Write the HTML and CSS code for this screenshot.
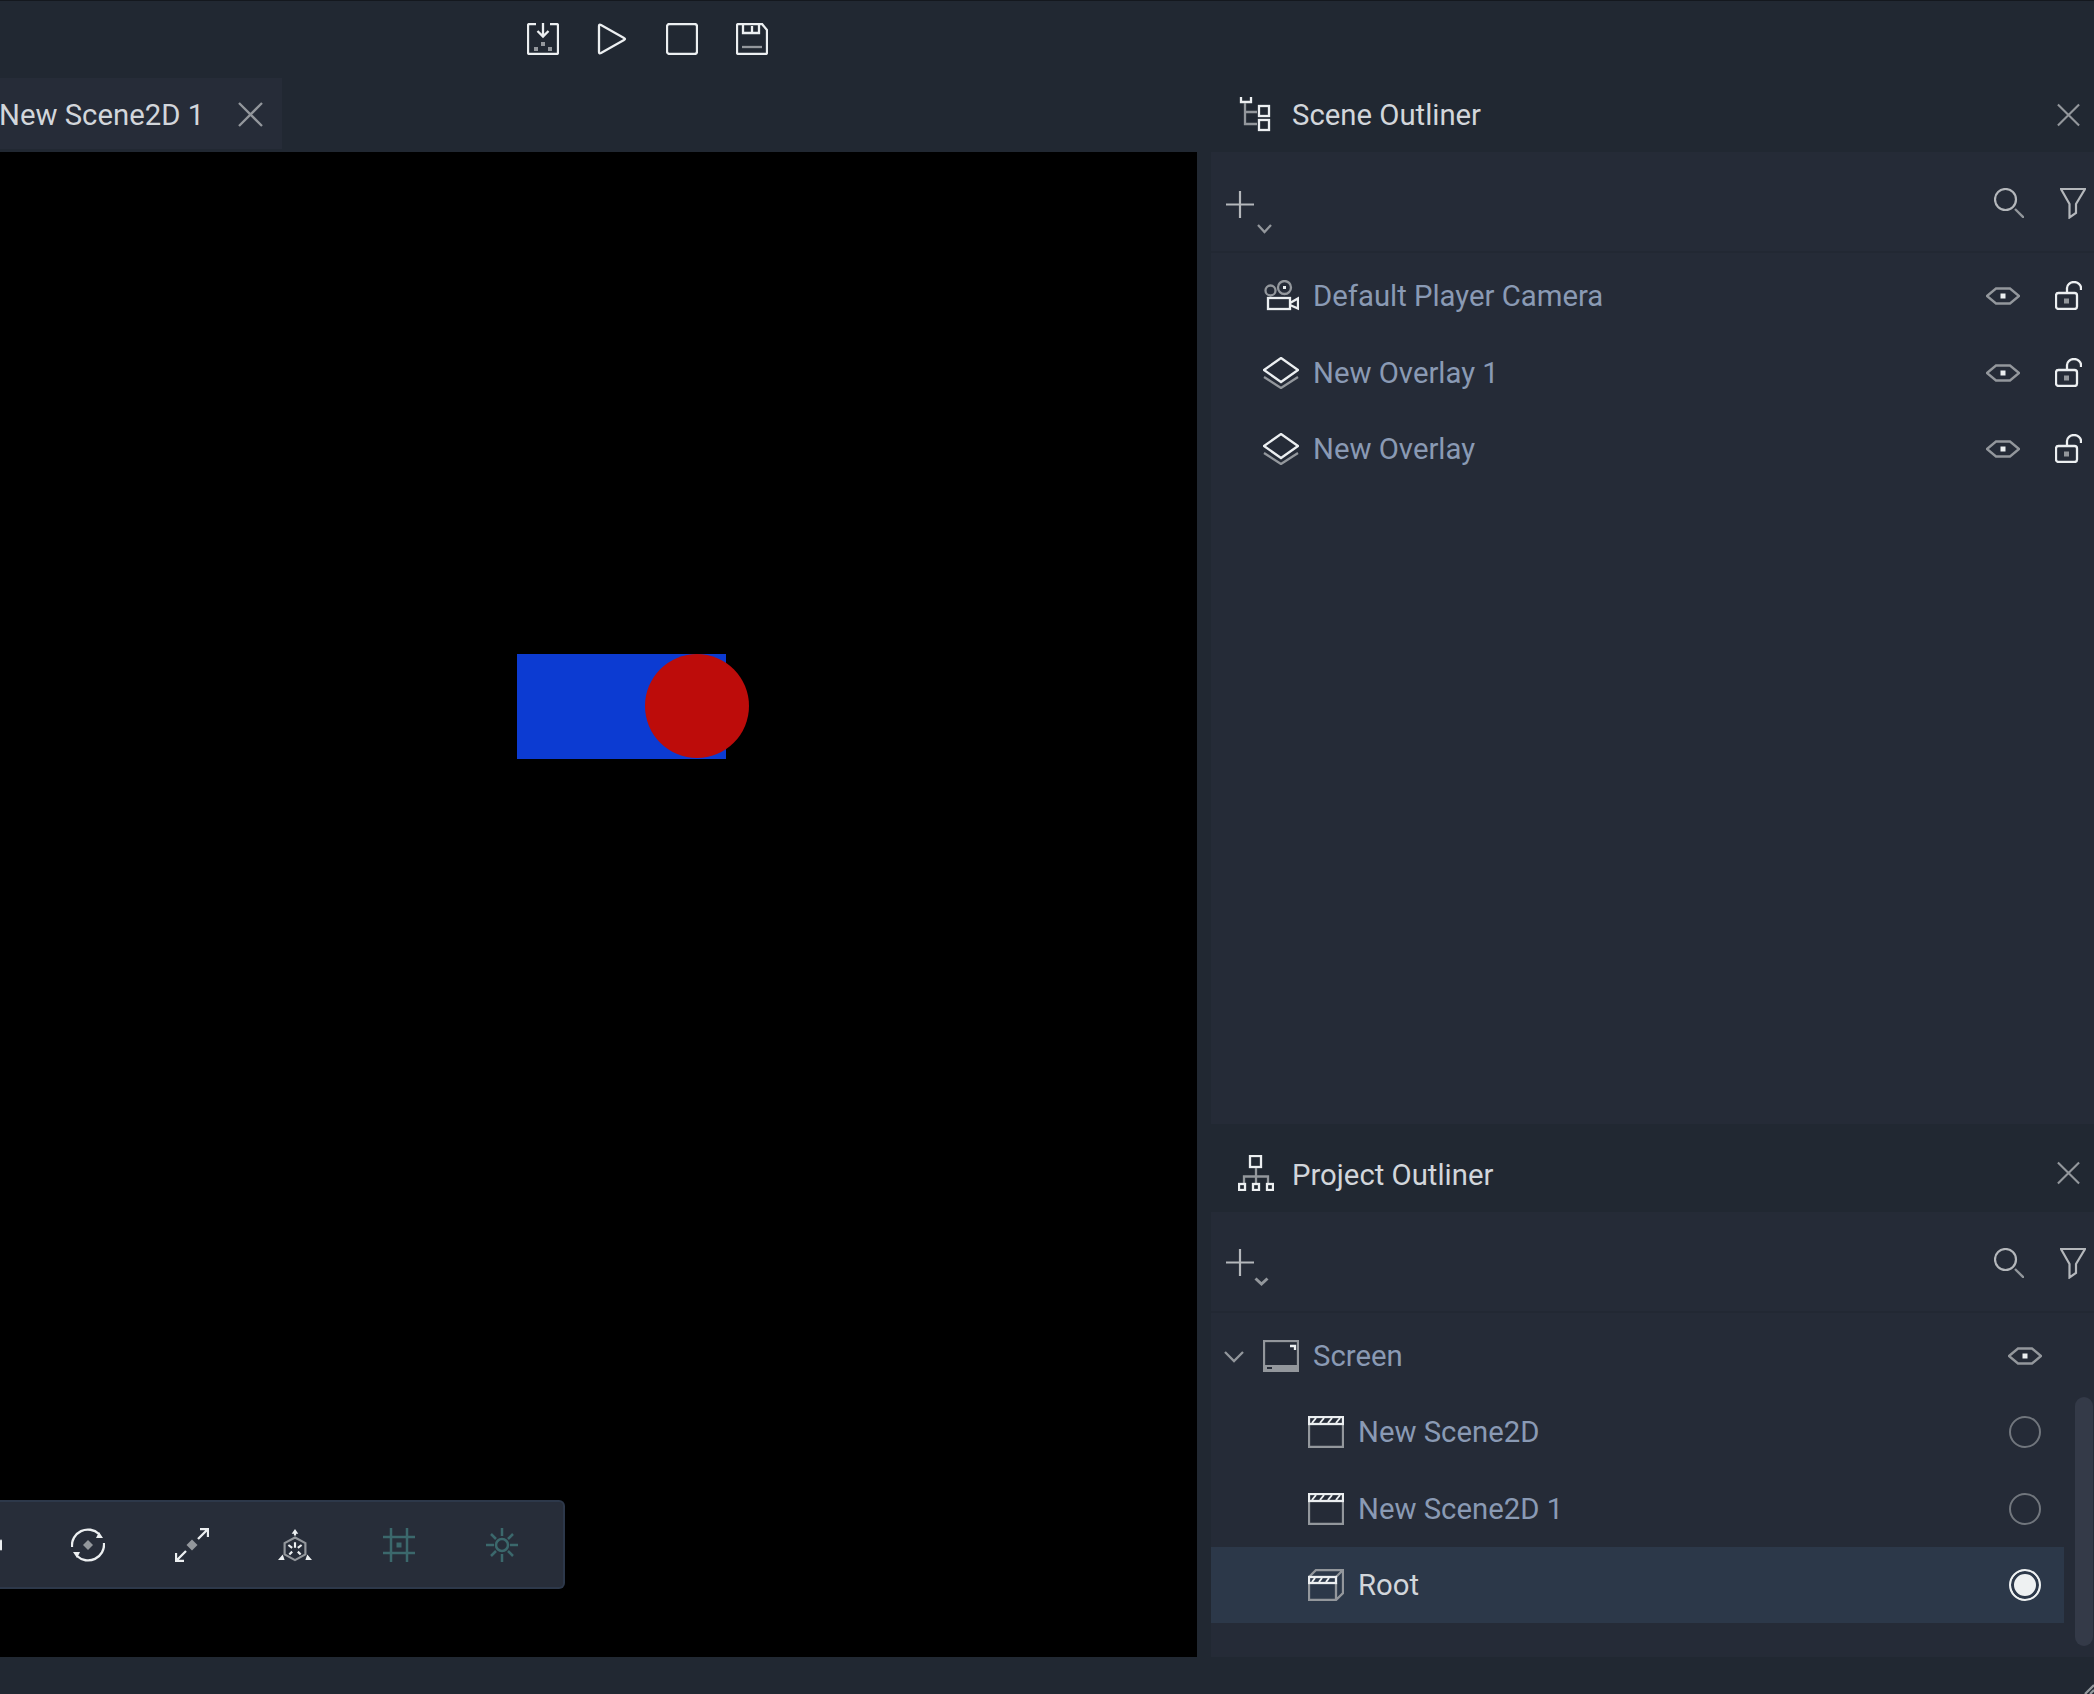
FILE: index.html
```html
<!DOCTYPE html>
<html lang="en">
<head>
<meta charset="utf-8">
<title>Scene Editor</title>
<link rel="stylesheet" href="styles.css">
</head>
<body>
<svg class="defs" aria-hidden="true">
  <symbol id="i-import" viewBox="0 0 32 32">
    <path class="w" d="M9 1H2.5Q1 1 1 2.5V29.5Q1 31 2.5 31H29.5Q31 31 31 29.5V2.5Q31 1 29.5 1H23"/>
    <path class="w" d="M16 0V13M10.5 8L16 13.5L21.500 8"/>
    <rect class="fg" x="14" y="19" width="4" height="4"/><rect class="fg" x="7" y="24" width="4" height="4"/><rect class="fg" x="21" y="24" width="4" height="4"/>
  </symbol>
  <symbol id="i-play" viewBox="0 0 32 32"><path class="w" d="M2 3Q2 1 4 2L27 15Q29 16 27 17L4 30Q2 31 2 29Z"/></symbol>
  <symbol id="i-stop" viewBox="0 0 32 32"><rect class="w" x="1" y="1" width="30" height="30" rx="2.500"/></symbol>
  <symbol id="i-save" viewBox="0 0 32 32">
    <path class="w" d="M2.500 1H26L31 7V29.500Q31 31 29.500 31H2.500Q1 31 1 29.500V2.500Q1 1 2.500 1Z"/>
    <path class="w" d="M7 1V10H23V1M16 3V9"/><path class="g" d="M6 24H26"/>
  </symbol>
  <symbol id="i-x" viewBox="0 0 25 25"><path class="g" d="M1 1L24 24M24 1L1 24"/></symbol>
  <symbol id="i-tree" viewBox="0 0 36 36">
    <path class="w" d="M3 0V5H13V0"/><path class="g" d="M7 6V27H19M7 15H19"/>
    <rect class="w" x="21" y="9" width="10" height="10"/><rect class="w" x="21" y="23" width="10" height="10"/>
  </symbol>
  <symbol id="i-hier" viewBox="0 0 36 36">
    <rect class="w" x="12" y="1" width="11" height="11"/>
    <path class="g" d="M18 13V28M6 28V21.500H30V28"/>
    <rect class="w" x="1" y="29" width="6" height="6"/><rect class="w" x="15" y="29" width="6" height="6"/><rect class="w" x="29" y="29" width="6" height="6"/>
  </symbol>
  <symbol id="i-plus" viewBox="0 0 28 28"><path class="l" d="M14 0V27M0 13.500H28"/></symbol>
  <symbol id="i-search" viewBox="0 0 30 30"><circle class="l" cx="11.500" cy="11.500" r="10.500"/><path class="g" d="M21 21L30 30"/></symbol>
  <symbol id="i-filter" viewBox="0 0 26 31"><path class="l" d="M1 1H25L16 16V25L9.500 29.500V16Z"/></symbol>
  <symbol id="i-eye" viewBox="0 0 34 18"><path class="g" d="M1 9L10 1.500H24L33 9L24 16.500H10Z"/><rect class="fw" x="14.500" y="6.500" width="5" height="5"/></symbol>
  <symbol id="i-lock" viewBox="0 0 27 29">
    <rect class="w" x="1" y="12" width="21" height="16" rx="2.500"/>
    <path class="w" d="M12 11V7A7 6 0 0 1 26 7V9"/>
    <rect class="fg" x="9" y="17.500" width="5" height="5"/>
  </symbol>
  <symbol id="i-camera" viewBox="0 0 36 32">
    <circle class="g" cx="7.500" cy="10.500" r="5"/><circle class="g" cx="21.500" cy="7.500" r="6.500"/><rect class="fw" x="20" y="6" width="3" height="3"/>
    <rect class="w" x="5" y="18" width="22" height="11"/><path class="w" d="M27 23L35 18.500V28.500L27 25"/>
  </symbol>
  <symbol id="i-layers" viewBox="0 0 36 32"><path class="g" d="M1 20L18 31L35 20"/><path class="w" d="M18 1L35 13L18 25L1 13Z"/></symbol>
  <symbol id="i-screen" viewBox="0 0 36 32">
    <rect class="g" x="1" y="1" width="34" height="30"/><rect class="fg" x="0" y="25" width="36" height="7"/>
    <rect class="fd" x="4" y="27" width="5" height="2"/><path class="w" d="M27 6H32V10"/>
  </symbol>
  <symbol id="i-clap" viewBox="0 0 36 32">
    <path class="g" d="M1 8V31H35V8"/><rect class="w" x="1" y="1" width="34" height="7"/>
    <path class="th" d="M4 7L8 2M12 7L16 2M20 7L24 2M28 7L32 2"/>
  </symbol>
  <symbol id="i-root" viewBox="0 0 36 32">
    <path class="g" d="M1 8L8 1H35V24L28 31H1V14M28 14V31M28 8L35 1"/><rect class="w" x="1" y="8" width="27" height="6"/>
    <path class="th" d="M4 13L7 9M11 13L14 9M18 13L21 9"/>
  </symbol>
  <symbol id="i-move" viewBox="0 0 34 34"><rect class="fw" x="29" y="13" width="8" height="8" transform="rotate(45 33 17)"/></symbol>
  <symbol id="i-rotate" viewBox="0 0 34 34">
    <path class="w" d="M1 19A16 16 0 0 1 28 6M33 15A16 16 0 0 1 6 28"/>
    <path class="fw" d="M32 10L25 10L28 4ZM2 24L9 24L6 30Z"/>
    <path class="fg" d="M17 12L22 17L17 22L12 17Z"/>
  </symbol>
  <symbol id="i-scale" viewBox="0 0 34 34">
    <path class="w" d="M23 11L33 1M25 1H33V9M11 23L1 33M1 25V33H9"/>
    <path class="fg" d="M17 11.500L22.500 17L17 22.500L11.500 17Z"/>
  </symbol>
  <symbol id="i-cube" viewBox="0 0 36 34">
    <path class="g" d="M18 9L29 15V27L18 33L7 27V15Z"/>
    <path class="w" d="M18 14V20M11 17L15 20M25 17L21 20M12 27L15 24M24 27L21 24"/>
    <path class="w" d="M18 7V3"/><path class="fw" d="M18 0L21.500 5H14.500ZM0 33L7 33L5 27ZM36 33L29 33L31 27Z"/>
  </symbol>
  <symbol id="i-grid" viewBox="0 0 32 34">
    <path class="t" d="M8 0V34M24 0V34M0 9H32M0 25H32"/><rect class="ft" x="13.500" y="14.500" width="5" height="5"/>
  </symbol>
  <symbol id="i-sun" viewBox="0 0 32 34">
    <circle class="t" cx="16" cy="17" r="6"/>
    <path class="t" d="M16 0V8M16 26V34M0 17H8M24 17H32M5 6L10 11M22 23L27 28M27 6L22 11M10 23L5 28"/>
  </symbol>
</svg>

<div class="app">
  <header class="topbar">
    <svg class="ic32"><use href="#i-import"/></svg>
    <svg class="ic32"><use href="#i-play"/></svg>
    <svg class="ic32"><use href="#i-stop"/></svg>
    <svg class="ic32"><use href="#i-save"/></svg>
  </header>

  <div class="main">
    <section class="editor">
      <div class="tabbar">
        <div class="tab">
          <span class="tab-label">New Scene2D 1</span>
          <svg class="tab-close"><use href="#i-x"/></svg>
        </div>
      </div>
      <div class="canvas">
        <div class="shape-rect"></div>
        <div class="shape-circle"></div>
        <div class="gizmo-bar">
          <svg class="ic-giz"><use href="#i-move"/></svg>
          <svg class="ic-giz"><use href="#i-rotate"/></svg>
          <svg class="ic-giz"><use href="#i-scale"/></svg>
          <svg class="ic-giz"><use href="#i-cube"/></svg>
          <svg class="ic-giz"><use href="#i-grid"/></svg>
          <svg class="ic-giz"><use href="#i-sun"/></svg>
        </div>
      </div>
    </section>

    <aside class="side">
      <section class="panel panel-scene">
        <div class="panel-head">
          <svg class="ic36"><use href="#i-tree"/></svg>
          <span class="panel-title">Scene Outliner</span>
          <svg class="panel-close"><use href="#i-x"/></svg>
        </div>
        <div class="tools">
          <div class="add add-scene">
            <svg class="ic-plus"><use href="#i-plus"/></svg>
            <svg class="add-chev" viewBox="0 0 15 9"><path class="g" d="M1 1L7.500 8L14 1"/></svg>
          </div>
          <svg class="ic-search"><use href="#i-search"/></svg>
          <svg class="ic-filter"><use href="#i-filter"/></svg>
        </div>
        <div class="list list-scene">
          <div class="row">
            <svg class="ic-row"><use href="#i-camera"/></svg>
            <span class="row-label">Default Player Camera</span>
            <svg class="ic-eye"><use href="#i-eye"/></svg>
            <svg class="ic-lock"><use href="#i-lock"/></svg>
          </div>
          <div class="row">
            <svg class="ic-row"><use href="#i-layers"/></svg>
            <span class="row-label">New Overlay 1</span>
            <svg class="ic-eye"><use href="#i-eye"/></svg>
            <svg class="ic-lock"><use href="#i-lock"/></svg>
          </div>
          <div class="row">
            <svg class="ic-row"><use href="#i-layers"/></svg>
            <span class="row-label">New Overlay</span>
            <svg class="ic-eye"><use href="#i-eye"/></svg>
            <svg class="ic-lock"><use href="#i-lock"/></svg>
          </div>
        </div>
      </section>

      <section class="panel panel-project">
        <div class="panel-head panel-head-project">
          <svg class="ic36"><use href="#i-hier"/></svg>
          <span class="panel-title panel-title-project">Project Outliner</span>
          <svg class="panel-close"><use href="#i-x"/></svg>
        </div>
        <div class="tools">
          <div class="add add-project">
            <svg class="ic-plus"><use href="#i-plus"/></svg>
            <svg class="add-chev add-chev-bold" viewBox="0 0 15 9"><path class="gb" d="M1.500 1.500L7.500 7L13.500 1.500"/></svg>
          </div>
          <svg class="ic-search"><use href="#i-search"/></svg>
          <svg class="ic-filter"><use href="#i-filter"/></svg>
        </div>
        <div class="list list-project">
          <div class="row row-parent">
            <svg class="row-chev" viewBox="0 0 20 11"><path class="g" d="M1 1L10 10L19 1"/></svg>
            <svg class="ic-row"><use href="#i-screen"/></svg>
            <span class="row-label">Screen</span>
            <svg class="ic-eye"><use href="#i-eye"/></svg>
          </div>
          <div class="row row-child">
            <svg class="ic-row"><use href="#i-clap"/></svg>
            <span class="row-label">New Scene2D</span>
            <span class="radio"></span>
          </div>
          <div class="row row-child">
            <svg class="ic-row"><use href="#i-clap"/></svg>
            <span class="row-label">New Scene2D 1</span>
            <span class="radio"></span>
          </div>
          <div class="row row-child row-selected">
            <svg class="ic-row"><use href="#i-root"/></svg>
            <span class="row-label">Root</span>
            <span class="radio radio-on"></span>
          </div>
          <div class="scrollbar"></div>
        </div>
      </section>
    </aside>
  </div>

  <footer class="statusbar">
    <svg class="grip" viewBox="0 0 12 12"><path class="g" d="M12 3L3 12M12 8L8 12"/></svg>
  </footer>
</div>
</body>
</html>
```
FILE: styles.css
```css
* { box-sizing: border-box; }
html, body { margin: 0; padding: 0; }
body {
  width: 2094px;
  height: 1694px;
  overflow: hidden;
  background: #212832;
  font-family: Roboto, "Liberation Sans", sans-serif;
  font-size: 29.300px;
  line-height: 36px;
}
.defs { position: absolute; width: 0; height: 0; }
svg { display: block; flex: none; overflow: visible; }

/* icon paint */
.w, .g, .l, .t, .th, .gb { fill: none; stroke-width: 2.300; }
.w { stroke: #eceff1; }
.g { stroke: #93979c; }
.gb { stroke: #93979c; stroke-width: 3; }
.l { stroke: #b4b7bb; stroke-width: 2.200; }
.t { stroke: #3b686c; stroke-width: 2.500; }
.th { stroke: #eceff1; stroke-width: 2; }
.fw { fill: #eceff1; }
.fg { fill: #93979c; }
.fd { fill: #252b37; }
.ft { fill: #3b686c; }

.app { display: flex; flex-direction: column; height: 1694px; }

.topbar {
  height: 78px;
  flex: none;
  display: flex;
  align-items: center;
  gap: 37.500px;
  padding: 0 0 2px 527px;
  border-top: 1px solid #14181e;
}
.ic32 { width: 32px; height: 32px; }

.main { flex: 1; display: flex; min-height: 0; }

.editor { width: 1197px; flex: none; display: flex; flex-direction: column; }
.tabbar { height: 74px; flex: none; }
.tab {
  width: 282px;
  height: 71px;
  background: #262c38;
  display: flex;
  align-items: center;
  padding-right: 19px;
  padding-top: 2px;
}
.tab-label { color: #d2d6db; margin-left: -1px; }
.tab-close { width: 25px; height: 25px; margin-left: auto; }

.canvas { flex: 1; background: #000; position: relative; overflow: hidden; }
.shape-rect {
  position: absolute;
  left: 517px; top: 502px;
  width: 209px; height: 105px;
  background: #0c3bd2;
}
.shape-circle {
  position: absolute;
  left: 645px; top: 502px;
  width: 104px; height: 104px;
  border-radius: 50%;
  background: #bd0c0a;
}
.gizmo-bar {
  position: absolute;
  left: -32px; top: 1348px;
  width: 597px; height: 89px;
  display: flex;
  align-items: center;
  gap: 69.400px;
  background: #272d39;
  border: 2px solid #2d384a;
  border-left: 0;
  border-radius: 6px;
}
.ic-giz { width: 34px; height: 34px; }

.side { flex: 1; padding-left: 14px; display: flex; flex-direction: column; min-width: 0; }
.panel { display: flex; flex-direction: column; }
.panel-scene { height: 1046px; flex: none; background: #252b37; }
.panel-project { flex: 1; background: #252b37; }

.panel-head {
  height: 74px;
  flex: none;
  margin-left: -14px;
  padding: 0 14px 0 41px;
  background: #212832;
  display: flex;
  align-items: center;
  gap: 18px;
}
.panel-head-project { height: 88px; padding-top: 10px; }
.ic36 { width: 36px; height: 36px; }
.panel-title { color: #d2d6db; }
.panel-title-project { margin-top: 3px; }
.panel-close { width: 23px; height: 24px; margin-left: auto; }

.tools {
  height: 101px;
  flex: none;
  display: flex;
  align-items: flex-start;
  padding: 36px 8px 0 15px;
  border-bottom: 2px solid #222833;
}
.add { position: relative; margin-right: auto; }
.add-scene { margin-top: 3px; }
.add-project { margin-top: 1px; }
.ic-plus { width: 28px; height: 28px; }
.add-chev { position: absolute; left: 31px; top: 33px; width: 15px; height: 9px; }
.add-chev-bold { left: 28px; top: 28px; }
.ic-search { width: 30px; height: 30px; }
.ic-filter { width: 26px; height: 31px; margin-left: 36px; }

.list { flex: 1; position: relative; }
.list-scene { padding: 5px 12px 0 0; }
.list-project { padding: 5px 30px 0 0; }

.row {
  height: 76.500px;
  display: flex;
  align-items: center;
  padding-left: 52px;
}
.list-project .row { height: 76.250px; }
.row-parent { padding-left: 13px; }
.row-child { padding-left: 97px; }
.row-selected { background: #2c3849; }
.row-selected .row-label { color: #d2d6db; }
.row-chev { width: 20px; height: 11px; margin-right: 19px; }
.ic-row { width: 36px; height: 32px; }
.row-label { color: #8a9ab4; margin-left: 14px; margin-right: auto; }
.ic-eye { width: 34px; height: 18px; }
.ic-lock { width: 27px; height: 29px; margin-left: 35px; margin-top: -1px; }
.row-parent .ic-eye { margin-right: 22px; }

.radio {
  width: 32px; height: 32px;
  border: 2px solid #71767d;
  border-radius: 50%;
  margin-right: 23px;
}
.radio-on {
  border-color: #eef1f2;
  background: #eef1f2;
  box-shadow: inset 0 0 0 3px #2c3849;
}

.scrollbar {
  position: absolute;
  right: 1px; top: 84px;
  width: 18px; height: 249px;
  border-radius: 9px;
  background: #343a48;
}

.statusbar { height: 37px; flex: none; position: relative; background: #212832; }
.grip { position: absolute; right: 0; bottom: 0; width: 12px; height: 12px; }
```
